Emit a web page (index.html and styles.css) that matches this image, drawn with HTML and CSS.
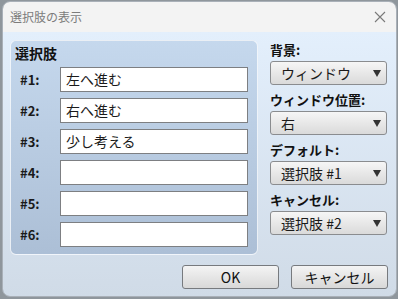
FILE: index.html
```html
<!DOCTYPE html>
<html lang="ja">
<head>
<meta charset="utf-8">
<link rel="stylesheet" href="styles.css">
</head>
<body>
<div class="window">
  <div class="titlebar">
    <span class="title">選択肢の表示</span>
    <svg class="close" width="12" height="12" viewBox="0 0 12 12"><path d="M1 1L11 11M11 1L1 11" stroke="#7a7a7a" stroke-width="1.1" fill="none"/></svg>
  </div>
  <div class="body">
    <div class="main">
      <div class="group">
        <div class="group-title">選択肢</div>
        <div class="rows">
          <div class="row"><span class="num">#1:</span><div class="field">左へ進む</div></div>
          <div class="row"><span class="num">#2:</span><div class="field">右へ進む</div></div>
          <div class="row"><span class="num">#3:</span><div class="field">少し考える</div></div>
          <div class="row"><span class="num">#4:</span><div class="field"></div></div>
          <div class="row"><span class="num">#5:</span><div class="field"></div></div>
          <div class="row"><span class="num">#6:</span><div class="field"></div></div>
        </div>
      </div>
      <div class="side">
        <div class="unit"><div class="label">背景:</div><div class="select"><span>ウィンドウ</span><span class="arrow"></span></div></div>
        <div class="unit"><div class="label">ウィンドウ位置:</div><div class="select"><span>右</span><span class="arrow"></span></div></div>
        <div class="unit"><div class="label">デフォルト:</div><div class="select"><span>選択肢 #1</span><span class="arrow"></span></div></div>
        <div class="unit"><div class="label">キャンセル:</div><div class="select"><span>選択肢 #2</span><span class="arrow"></span></div></div>
      </div>
    </div>
    <div class="footer">
      <div class="btn">OK</div>
      <div class="btn">キャンセル</div>
    </div>
  </div>
</div>
</body>
</html>
```

FILE: styles.css
```css
* { box-sizing: border-box; }
html, body { margin: 0; padding: 0; }
body {
  width: 398px;
  height: 299px;
  background: #8f969c;
  font-family: "Noto Sans CJK JP", "Noto Sans", sans-serif;
  overflow: hidden;
}
.window {
  margin: 1px 0 0 2px;
  width: 395px;
  height: 296px;
  border: 1px solid #a9b0b8;
  border-radius: 8px;
  overflow: hidden;
  display: flex;
  flex-direction: column;
}
.titlebar {
  height: 30px;
  flex: none;
  background: #f3f3f3;
  display: flex;
  align-items: center;
  justify-content: space-between;
  padding: 0 10px 0 7px;
}
.title {
  font-size: 12px;
  color: #7c7c7c;
  line-height: 16px;
}
.close { display: block; }
.body {
  flex: 1;
  background: linear-gradient(#e3effc, #d0dbe7);
  padding: 8px 8px 0 7px;
  display: flex;
  flex-direction: column;
}
.main {
  display: flex;
  gap: 12px;
}
.group {
  width: 248px;
  height: 215px;
  border: 1px solid rgba(255,255,255,0.75);
  border-radius: 6px;
  background: linear-gradient(#c5d8ed, #acbfd6);
  padding: 2px 9px 0 4px;
  display: flex;
  flex-direction: column;
}
.group-title {
  height: 20px;
  line-height: 20px;
  font-size: 14px;
  font-weight: bold;
  color: #111;
  margin-bottom: 4px;
}
.rows {
  display: flex;
  flex-direction: column;
  gap: 6px;
}
.row {
  display: flex;
  align-items: center;
  height: 25px;
  padding-left: 5px;
}
.num {
  width: 40px;
  font-size: 13px;
  font-weight: bold;
  color: #1a1a1a;
  line-height: 18px;
}
.field {
  width: 188px;
  height: 25px;
  background: #fff;
  border: 1px solid #7d7f82;
  font-size: 14px;
  line-height: 23px;
  padding-left: 5px;
  color: #1a1a1a;
}
.side {
  width: 117px;
  display: flex;
  flex-direction: column;
  gap: 5px;
}
.unit {
  display: flex;
  flex-direction: column;
  gap: 1px;
}
.label {
  height: 20px;
  line-height: 20px;
  font-size: 13px;
  font-weight: bold;
  color: #111;
}
.select {
  height: 24px;
  border: 1px solid #8a8c8f;
  border-radius: 3px;
  background: linear-gradient(#f6f6f6, #dadada);
  display: flex;
  align-items: center;
  justify-content: space-between;
  padding: 0 5px 0 10px;
  font-size: 14px;
  color: #1a1a1a;
  line-height: 20px;
}
.arrow {
  width: 0;
  height: 0;
  border-left: 4px solid transparent;
  border-right: 4px solid transparent;
  border-top: 7px solid #333;
}
.footer {
  display: flex;
  justify-content: flex-end;
  gap: 12px;
  margin-top: 10px;
}
.btn {
  width: 97px;
  height: 24px;
  border: 1px solid #777a7e;
  border-radius: 3px;
  background: linear-gradient(#f4f4f4, #d8d8d8);
  font-size: 14px;
  line-height: 22px;
  text-align: center;
  color: #111;
}
```
